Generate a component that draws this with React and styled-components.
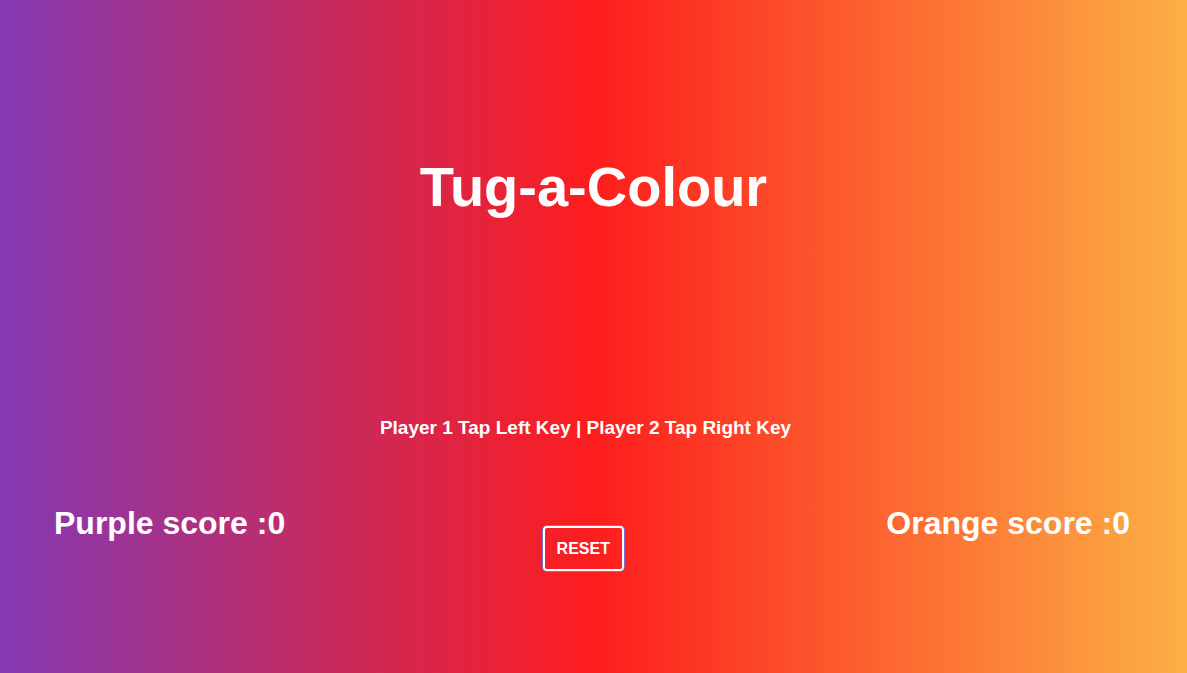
import React, { useState } from 'react'
import styled, { createGlobalStyle } from 'styled-components'

const GlobalStyle = createGlobalStyle`
    html, body {
        margin:0;
        padding:0;
        height:100%;
    }
    #root {
        height:100%;
    }
`;

const Container = styled.div`
    height:673px;
    background: linear-gradient(90deg, #833ab4 0%, #fd1d1d 50%, #fcb045 100%);
    color:#fff;
    font-family:"Liberation Sans", Arial, sans-serif;
    display:flex;
    flex-direction:column;
    align-items:center;
    overflow:hidden;
`;

const Title = styled.h1`
    font-size:56px;
    font-weight:700;
    margin:155px 0 0;
    line-height:64px;
`;

const Instructions = styled.p`
    font-size:19px;
    font-weight:700;
    margin:197px 16px 0 0;
    line-height:24px;
`;

const ScoreRow = styled.div`
    width:100%;
    box-sizing:border-box;
    padding:0 57px 0 54px;
    margin-top:63px;
    display:flex;
    justify-content:space-between;
    align-items:flex-start;
`;

const Score = styled.h2`
    font-size:32px;
    font-weight:700;
    margin:0;
    line-height:40px;
`;

const ResetButton = styled.button`
    margin:23px 5px 0 0;
    width:81px;
    height:45px;
    padding:0;
    background:transparent;
    color:#fff;
    border:2px solid #fff;
    border-radius:4px;
    box-shadow:0 0 0 1px #7b74c9;
    font-family:"Liberation Sans", Arial, sans-serif;
    font-weight:700;
    font-size:16px;
    cursor:pointer;
`;

const App = () => {
    const [purple, setPurple] = useState(0)
    const [orange, setOrange] = useState(0)

    const reset = () => {
        setPurple(0)
        setOrange(0)
    }

    return (
        <Container>
            <GlobalStyle />
            <Title>Tug-a-Colour</Title>
            <Instructions>Player 1 Tap Left Key | Player 2 Tap Right Key</Instructions>
            <ScoreRow>
                <Score>Purple score :{purple}</Score>
                <ResetButton onClick={reset}>RESET</ResetButton>
                <Score>Orange score :{orange}</Score>
            </ScoreRow>
        </Container>
    )
}
export default App;
